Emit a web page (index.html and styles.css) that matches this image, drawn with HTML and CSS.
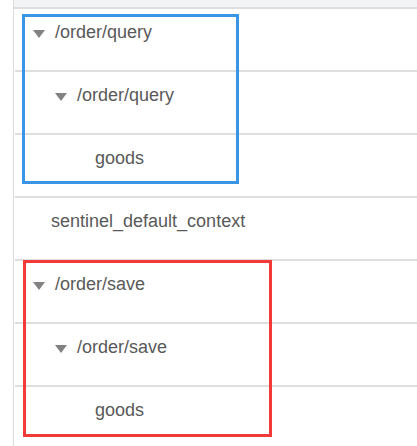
FILE: index.html
```html
<!DOCTYPE html>
<html>
<head>
<meta charset="utf-8">
<link rel="stylesheet" href="styles.css">
</head>
<body>
<div class="panel">
  <div class="head"></div>
  <div class="tree">
    <div class="row lvl1"><span class="tog"><svg width="12" height="8" viewBox="0 0 12 8"><polygon points="0,0 12,0 6,8"/></svg></span><span class="label">/order/query</span></div>
    <div class="row lvl2"><span class="tog"><svg width="12" height="8" viewBox="0 0 12 8"><polygon points="0,0 12,0 6,8"/></svg></span><span class="label">/order/query</span></div>
    <div class="row lvl3"><span class="leaf"></span><span class="label">goods</span></div>
    <div class="row lvl1"><span class="leaf"></span><span class="label">sentinel_default_context</span></div>
    <div class="row lvl1"><span class="tog"><svg width="12" height="8" viewBox="0 0 12 8"><polygon points="0,0 12,0 6,8"/></svg></span><span class="label">/order/save</span></div>
    <div class="row lvl2"><span class="tog"><svg width="12" height="8" viewBox="0 0 12 8"><polygon points="0,0 12,0 6,8"/></svg></span><span class="label">/order/save</span></div>
    <div class="row lvl3"><span class="leaf"></span><span class="label">goods</span></div>
  </div>
  <div class="mark mark-blue"></div>
  <div class="mark mark-red"></div>
</div>
</body>
</html>
```
FILE: styles.css
```css
html, body {
  margin: 0;
  padding: 0;
  background: #ffffff;
  overflow: hidden;
}
body {
  padding-left: 13px;
  font-family: "Liberation Sans", Arial, sans-serif;
}
.panel {
  position: relative;
  border-left: 1px solid #dcdcdc;
  height: 446px;
  box-sizing: border-box;
}
.head {
  height: 7px;
  background: #f3f4f6;
  border-bottom: 2px solid #dedede;
}
.tree {
  display: flex;
  flex-direction: column;
  padding-left: 1px;
}
.row {
  border-bottom: 2px solid #dedede;
  display: flex;
  align-items: flex-start;
  padding-top: 13px;
  box-sizing: content-box;
  height: 48px;
  font-size: 18px;
  line-height: 21px;
  color: #595959;
}
.lvl1 { padding-left: 18px; }
.lvl2 { padding-left: 40px; }
.lvl3 { padding-left: 62px; }
.tog {
  width: 22px;
  flex: none;
  display: flex;
  padding-top: 8px;
}
.tog svg { fill: #828282; display: block; }
.leaf {
  width: 18px;
  flex: none;
}
.label { white-space: nowrap; }
.mark {
  position: absolute;
  box-sizing: border-box;
  border: 3px solid;
}
.mark-blue {
  border-color: #3a96e4;
  left: 8px;
  top: 14px;
  width: 217px;
  height: 170px;
}
.mark-red {
  border-color: #f23a3b;
  left: 9px;
  top: 260px;
  width: 249px;
  height: 177px;
}
```
